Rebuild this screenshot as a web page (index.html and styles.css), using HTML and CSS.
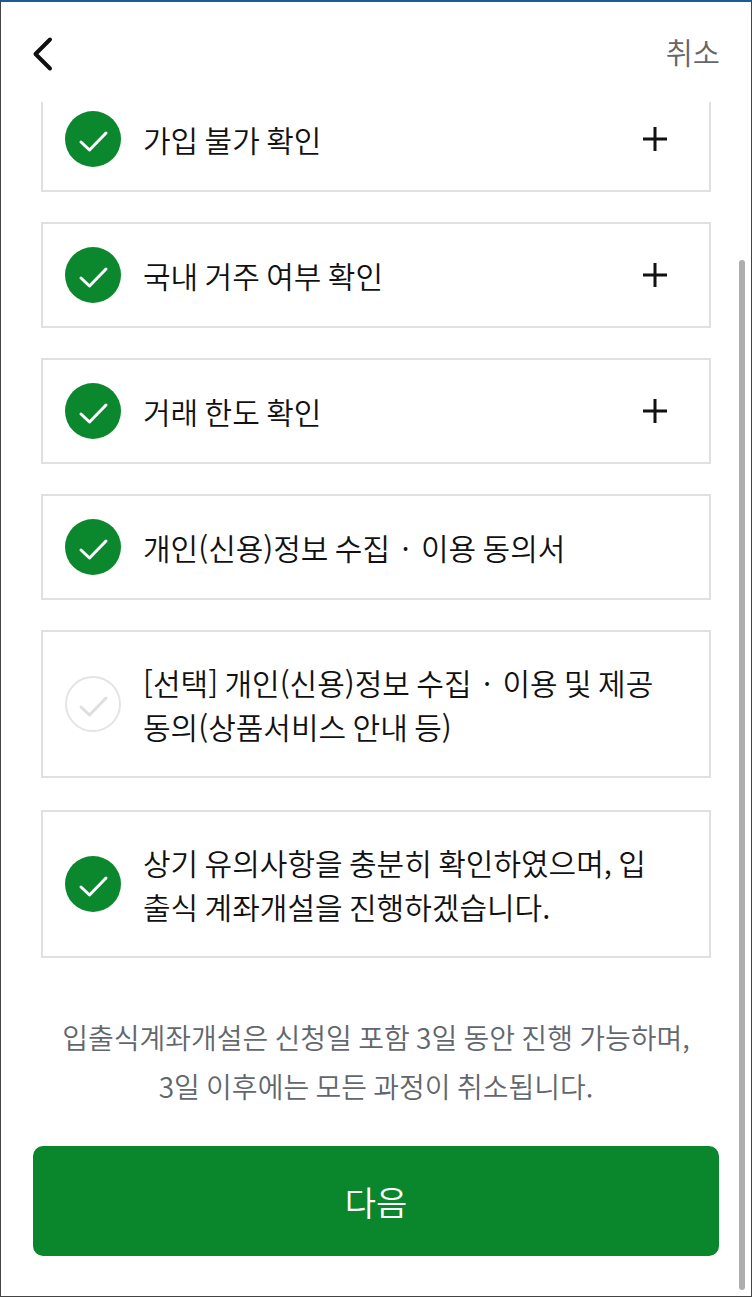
FILE: index.html
```html
<!DOCTYPE html>
<html lang="ko">
<head>
  <meta charset="UTF-8">
  <meta name="viewport" content="width=device-width, initial-scale=1.0">
  <title>입출식 계좌개설</title>
  <link rel="stylesheet" href="styles.css">
</head>

<body>
  <div class="screen">
    <header class="top">
      <button class="back" aria-label="뒤로">
        <svg width="24" height="36" viewBox="0 0 24 36"><path d="M20 3.5 L5.5 18 L20 32.5" fill="none" stroke="#111" stroke-width="4" stroke-linecap="round" stroke-linejoin="round"/></svg>
      </button>
      <span class="cancel">취소</span>
    </header>

    <div class="list">
      <div class="card">
        <svg class="check" viewBox="0 0 56 56"><circle cx="28" cy="28" r="28" fill="#0b872d"/><path d="M16 31 L24.5 39 L41 22" fill="none" stroke="#fff" stroke-width="3" stroke-linecap="round" stroke-linejoin="round"/></svg>
        <span class="label">가입 불가 확인</span>
        <svg class="plus" viewBox="0 0 24 24"><path d="M12 0 V24 M0 12 H24" stroke="#111" stroke-width="3"/></svg>
      </div>
      <div class="card">
        <svg class="check" viewBox="0 0 56 56"><circle cx="28" cy="28" r="28" fill="#0b872d"/><path d="M16 31 L24.5 39 L41 22" fill="none" stroke="#fff" stroke-width="3" stroke-linecap="round" stroke-linejoin="round"/></svg>
        <span class="label">국내 거주 여부 확인</span>
        <svg class="plus" viewBox="0 0 24 24"><path d="M12 0 V24 M0 12 H24" stroke="#111" stroke-width="3"/></svg>
      </div>
      <div class="card">
        <svg class="check" viewBox="0 0 56 56"><circle cx="28" cy="28" r="28" fill="#0b872d"/><path d="M16 31 L24.5 39 L41 22" fill="none" stroke="#fff" stroke-width="3" stroke-linecap="round" stroke-linejoin="round"/></svg>
        <span class="label">거래 한도 확인</span>
        <svg class="plus" viewBox="0 0 24 24"><path d="M12 0 V24 M0 12 H24" stroke="#111" stroke-width="3"/></svg>
      </div>
      <div class="card">
        <svg class="check" viewBox="0 0 56 56"><circle cx="28" cy="28" r="28" fill="#0b872d"/><path d="M16 31 L24.5 39 L41 22" fill="none" stroke="#fff" stroke-width="3" stroke-linecap="round" stroke-linejoin="round"/></svg>
        <span class="label">개인(신용)정보 수집 <span class="dot">·</span> 이용 동의서</span>
      </div>
      <div class="card tall">
        <svg class="check" viewBox="0 0 56 56"><circle cx="28" cy="28" r="27" fill="#fff" stroke="#e4e4e4" stroke-width="2"/><path d="M16 31 L24.5 39 L41 22" fill="none" stroke="#dedede" stroke-width="3" stroke-linecap="round" stroke-linejoin="round"/></svg>
        <span class="label">[선택] 개인(신용)정보 수집 <span class="dot">·</span> 이용 및 제공<br>동의(상품서비스 안내 등)</span>
      </div>
      <div class="card tall last">
        <svg class="check" viewBox="0 0 56 56"><circle cx="28" cy="28" r="28" fill="#0b872d"/><path d="M16 31 L24.5 39 L41 22" fill="none" stroke="#fff" stroke-width="3" stroke-linecap="round" stroke-linejoin="round"/></svg>
        <span class="label">상기 유의사항을 충분히 확인하였으며, 입<br>출식 계좌개설을 진행하겠습니다.</span>
      </div>
      <p class="notice">입출식계좌개설은 신청일 포함 3일 동안 진행 가능하며,<br>3일 이후에는 모든 과정이 취소됩니다.</p>
      <button class="next">다음</button>
    </div>

    <div class="scrollbar"></div>
  </div>
</body>
</html>
```

FILE: styles.css
```css
* {
  box-sizing: border-box;
}

html, body {
  margin: 0;
  padding: 0;
}

body {
  font-family: "Noto Sans CJK KR", "Noto Sans", sans-serif;
  font-weight: 350;
  background-color: #fff;
  color: #111;
}

.screen {
  position: relative;
  display: flex;
  flex-direction: column;
  width: 752px;
  height: 1297px;
  overflow: hidden;
  border-top: 2px solid #1f5a96;
  border-left: 1px solid #444;
  border-right: 1px solid #444;
  border-bottom: 1px solid #444;
}

.top {
  display: flex;
  align-items: center;
  justify-content: space-between;
  flex: none;
  height: 100px;
  padding: 0 31px 0 29px;
}

.back {
  display: flex;
  margin-top: 4px;
  padding: 0;
  border: none;
  background: none;
}

.cancel {
  margin-top: -2px;
  font-size: 29.5px;
  color: #62666d;
}

.list {
  flex: 1;
  overflow: hidden;
  display: flex;
  flex-direction: column;
  gap: 30px;
  padding: 0 40px 0 40px;
}

.card {
  display: flex;
  align-items: center;
  flex: none;
  height: 106px;
  padding: 0 42px 0 22px;
  border: 2px solid #e0e0e0;
}

.card:first-child {
  margin-top: -16px;
}

.card.tall {
  height: 148px;
}

.card.last {
  margin-top: 2px;
}

.check {
  flex: none;
  width: 56px;
  height: 56px;
  margin-right: 22px;
}

.label {
  flex: 1;
  font-size: 30px;
  line-height: 44px;
  word-spacing: -2px;
}

.dot {
  margin: 0 5px;
}

.plus {
  flex: none;
  width: 24px;
  height: 24px;
}

.notice {
  margin: 25px -8px 0;
  font-size: 28px;
  line-height: 49px;
  word-spacing: -1.5px;
  text-align: center;
  color: #62666d;
}

.next {
  flex: none;
  height: 110px;
  margin: 5px -8px 0;
  border: none;
  border-radius: 10px;
  background-color: #0a862c;
  color: #fff;
  font-family: inherit;
  font-weight: inherit;
  font-size: 34px;
}

.scrollbar {
  position: absolute;
  top: 258px;
  right: 6px;
  width: 6px;
  height: 1030px;
  border-radius: 3px;
  background-color: #adadad;
}
```
